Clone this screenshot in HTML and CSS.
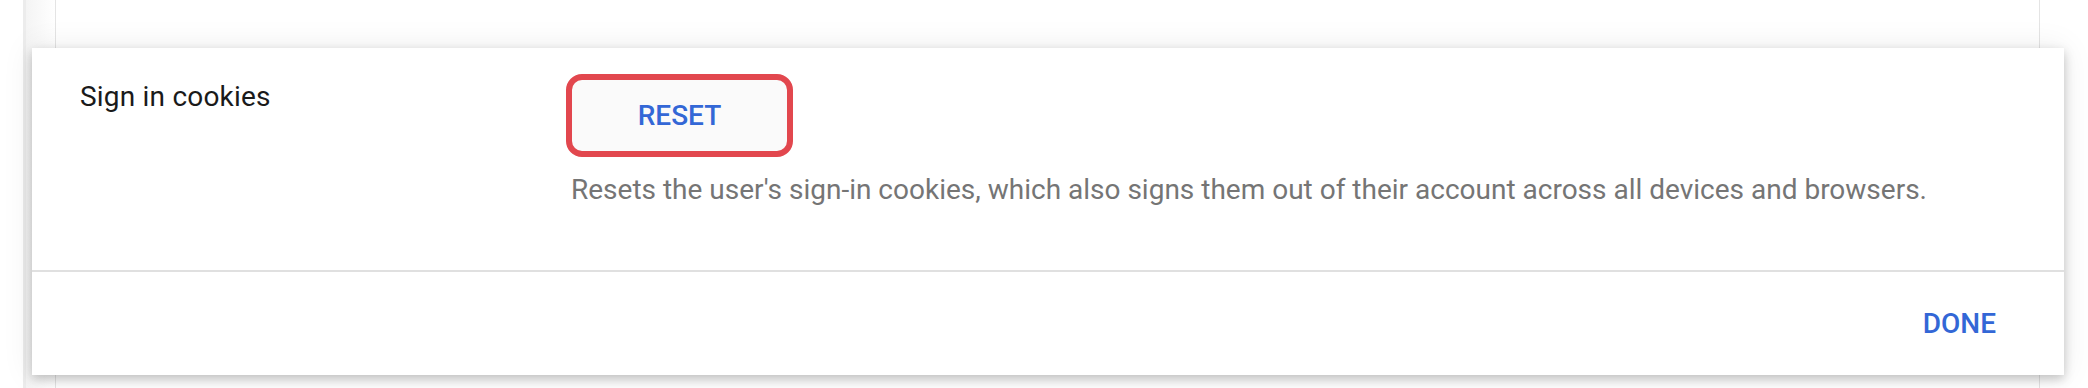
FILE: index.html
```html
<!DOCTYPE html>
<html lang="en">

<head>
    <meta charset="UTF-8">
    <title>Sign in cookies</title>
    <link rel="stylesheet" href="styles.css">
</head>

<body>

    <div class="screen">
        <div class="page">
            <div class="sheet"></div>
        </div>

        <div class="dialog">
            <div class="dialog-body">
                <div class="setting-label">Sign in cookies</div>
                <div class="setting-control">
                    <button class="btn-reset">RESET</button>
                    <p class="setting-desc">Resets the user's sign-in cookies, which also signs them out of their account across all devices and browsers.</p>
                </div>
            </div>
            <div class="dialog-actions">
                <button class="btn-text">DONE</button>
            </div>
        </div>
    </div>

</body>

</html>
```

FILE: styles.css
```css
body {
    margin: 0;
    background: #fff;
    font-family: Roboto, "Noto Sans", sans-serif;
}

.screen {
    position: relative;
    height: 388px;
    overflow: hidden;
}

/* page behind the dialog */
.page {
    height: 100%;
    margin-left: 23px;
    border-left: 3px solid #ececec;
    padding: 0 48px 0 29px;
    background: linear-gradient(to right, #f4f4f4, #fff 30px);
}

.sheet {
    height: 100%;
    background: #fff;
    border-left: 1px solid #e4e4e4;
    border-right: 1px solid #e4e4e4;
}

/* dialog sits over the page */
.dialog {
    position: absolute;
    top: 48px;
    left: 32px;
    width: 2032px;
    background: #fff;
    box-shadow: 0 4px 10px rgba(0, 0, 0, 0.22), 0 0 30px rgba(0, 0, 0, 0.08);
}

.dialog-body {
    display: flex;
    align-items: flex-start;
    padding: 26px 48px 60px;
    border-bottom: 2px solid #e0e0e0;
}

.setting-label {
    flex: 0 0 486px;
    padding-top: 3px;
    font-size: 28px;
    line-height: 40px;
    letter-spacing: 0.2px;
    color: #1a1a1a;
}

.setting-control {
    flex: 1;
}

.btn-reset {
    display: block;
    width: 227px;
    padding: 15.5px 0;
    border: 6px solid #e2474e;
    border-radius: 16px;
    background: #fafafa;
    color: #3367d6;
    font-family: inherit;
    font-size: 28px;
    font-weight: 500;
    line-height: 40px;
    cursor: pointer;
}

.setting-desc {
    margin: 13px 0 0;
    padding-left: 5px;
    font-size: 28px;
    line-height: 40px;
    color: #757575;
}

.dialog-actions {
    display: flex;
    justify-content: flex-end;
    align-items: center;
    height: 103px;
    padding-right: 52px;
}

.btn-text {
    padding: 0 16px;
    border: none;
    background: none;
    color: #3367d6;
    font-family: inherit;
    font-size: 28px;
    font-weight: 500;
    line-height: 40px;
    cursor: pointer;
}
```
